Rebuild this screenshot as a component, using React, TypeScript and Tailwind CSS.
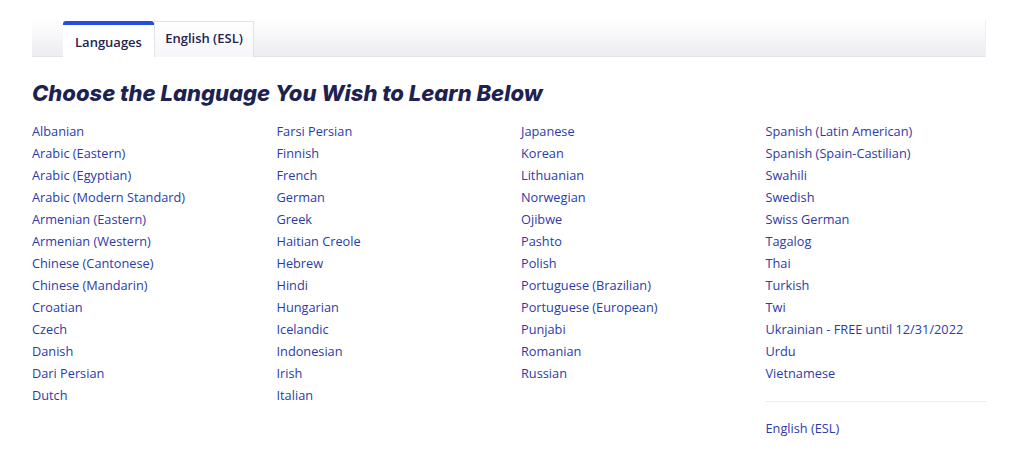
import React from 'react';

const columns: string[][] = [
  [
    'Albanian',
    'Arabic (Eastern)',
    'Arabic (Egyptian)',
    'Arabic (Modern Standard)',
    'Armenian (Eastern)',
    'Armenian (Western)',
    'Chinese (Cantonese)',
    'Chinese (Mandarin)',
    'Croatian',
    'Czech',
    'Danish',
    'Dari Persian',
    'Dutch',
  ],
  [
    'Farsi Persian',
    'Finnish',
    'French',
    'German',
    'Greek',
    'Haitian Creole',
    'Hebrew',
    'Hindi',
    'Hungarian',
    'Icelandic',
    'Indonesian',
    'Irish',
    'Italian',
  ],
  [
    'Japanese',
    'Korean',
    'Lithuanian',
    'Norwegian',
    'Ojibwe',
    'Pashto',
    'Polish',
    'Portuguese (Brazilian)',
    'Portuguese (European)',
    'Punjabi',
    'Romanian',
    'Russian',
  ],
  [
    'Spanish (Latin American)',
    'Spanish (Spain-Castilian)',
    'Swahili',
    'Swedish',
    'Swiss German',
    'Tagalog',
    'Thai',
    'Turkish',
    'Twi',
    'Ukrainian - FREE until 12/31/2022',
    'Urdu',
    'Vietnamese',
  ],
];

const LangLink: React.FC<{ name: string }> = ({ name }) => (
  <li>
    <a href="#" className="block h-[22px] leading-[22px] text-[12.75px] text-[#2b3ba8] hover:underline">
      {name}
    </a>
  </li>
);

export default function App() {
  return (
    <div className="min-h-[462px] bg-white pl-8 pr-[38px] pt-5 font-['Open_Sans',sans-serif]">
      {/* tab strip */}
      <div className="flex h-[37px] items-end bg-gradient-to-b from-white to-[#ececf1] border-b border-[#e3e3e8] border-r border-r-[#f0f0f3] pl-[31px]">
        <button className="relative h-[36px] w-[91px] bg-white border-t-4 border-[#2749e6] rounded-t-[3px] text-[13px] font-semibold text-[#1f2552] -mb-px pt-[3px]">
          Languages
        </button>
        <button className="h-[36px] w-[100px] bg-gradient-to-b from-white to-[#f6f6f9] border border-b-0 border-[#e2e2e8] text-[13px] font-semibold text-[#1f2552] -mb-px pb-[2px]">
          English (ESL)
        </button>
      </div>

      <h1 className="mt-[21px] text-[22px] leading-[30px] font-extrabold italic text-[#1d2250] font-['Inter',sans-serif]">
        Choose the Language You Wish to Learn Below
      </h1>

      <div className="mt-[12px] grid grid-cols-4 gap-x-6">
        {columns.map((col, i) => (
          <div key={i}>
            <ul>
              {col.map((name) => (
                <LangLink key={name} name={name} />
              ))}
            </ul>
            {i === 3 && (
              <>
                <div className="mt-[17px] border-t border-[#ececf0]" />
                <ul className="mt-[15px]">
                  <LangLink name="English (ESL)" />
                </ul>
              </>
            )}
          </div>
        ))}
      </div>
    </div>
  );
}
